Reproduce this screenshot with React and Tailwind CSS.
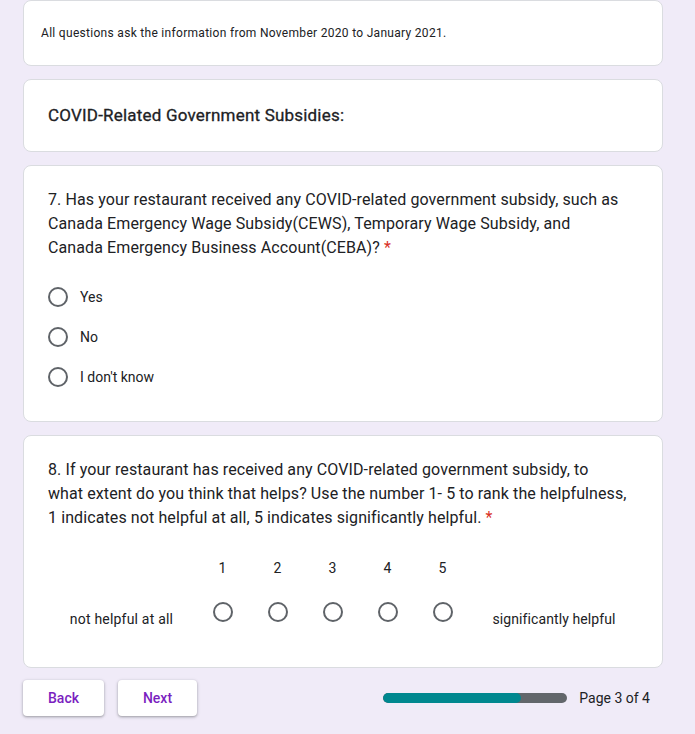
import React from "react";

const font = { fontFamily: "Roboto, 'Noto Sans', Arial, sans-serif" };

function Radio() {
  return (
    <span className="block w-5 h-5 rounded-full border-2 border-[#5f6368] bg-white shrink-0" />
  );
}

function Card({ className = "", children }) {
  return (
    <div
      className={
        "bg-white border border-[#dadce0] rounded-lg w-[640px] " + className
      }
    >
      {children}
    </div>
  );
}

function App() {
  const options = ["Yes", "No", "I don't know"];
  const scale = [1, 2, 3, 4, 5];

  return (
    <div
      className="bg-[#f0ebf8] min-h-screen w-full text-[#202124]"
      style={font}
    >
      <div className="ml-[23px] flex flex-col gap-[13px]">
        {/* Intro */}
        <Card className="h-[66px] flex items-center px-[17px]">
          <p className="text-[12px] tracking-[0.3px]">
            All questions ask the information from November 2020 to January
            2021.
          </p>
        </Card>

        {/* Section header */}
        <Card className="h-[73px] flex items-center px-6">
          <h2 className="text-[17px] tracking-[0.2px] [-webkit-text-stroke:0.3px_#202124]">
            COVID-Related Government Subsidies:
          </h2>
        </Card>

        {/* Question 7 */}
        <Card className="h-[257px] px-6 pt-[22px]">
          <p className="text-[16px] leading-6 tracking-[0.1px] whitespace-nowrap">
            7. Has your restaurant received any COVID-related government
            subsidy, such as
            <br />
            Canada Emergency Wage Subsidy(CEWS), Temporary Wage Subsidy, and
            <br />
            Canada Emergency Business Account(CEBA)?{" "}
            <span className="text-[#d93025]">*</span>
          </p>
          <div className="mt-[17px] flex flex-col">
            {options.map((o) => (
              <label key={o} className="h-10 flex items-center gap-3">
                <Radio />
                <span className="text-[14px]">{o}</span>
              </label>
            ))}
          </div>
        </Card>

        {/* Question 8 */}
        <Card className="h-[233px] px-6 pt-[22px]">
          <p className="text-[16px] leading-6 tracking-[0.1px] whitespace-nowrap">
            8. If your restaurant has received any COVID-related government
            subsidy, to
            <br />
            what extent do you think that helps? Use the number 1- 5 to rank
            the helpfulness,
            <br />1 indicates not helpful at all, 5 indicates significantly
            helpful. <span className="text-[#d93025]">*</span>
          </p>
          <div className="mt-[26px]">
            <div className="flex h-6 items-center text-[14px]">
              <div className="w-[147px]" />
              {scale.map((n) => (
                <div key={n} className="w-[55px] text-center">
                  {n}
                </div>
              ))}
            </div>
            <div className="flex h-12 mt-2 items-center text-[14px]">
              <div className="w-[147px] text-center mt-[14px] tracking-[0.2px]">
                not helpful at all
              </div>
              {scale.map((n) => (
                <div key={n} className="w-[55px] flex justify-center">
                  <Radio />
                </div>
              ))}
              <div className="w-[168px] text-center mt-[14px] tracking-[0.1px]">
                significantly helpful
              </div>
            </div>
          </div>
        </Card>

        {/* Footer */}
        <div className="w-[640px] flex items-center justify-between mt-[-1px] pr-[13px]">
          <div className="flex gap-[14px]">
            <button className="w-[81px] h-9 bg-white rounded shadow-[0_1px_2px_rgba(60,64,67,0.3),0_1px_3px_1px_rgba(60,64,67,0.15)] text-[14px] font-medium text-[#7b1fbf]">
              Back
            </button>
            <button className="w-[79px] h-9 bg-white rounded shadow-[0_1px_2px_rgba(60,64,67,0.3),0_1px_3px_1px_rgba(60,64,67,0.15)] text-[14px] font-medium text-[#7b1fbf]">
              Next
            </button>
          </div>
          <div className="flex items-center gap-3 pl-[1px]">
            <div className="w-[184px] h-[10px] rounded-full bg-[#62666b] overflow-hidden">
              <div className="h-full w-[75%] rounded-full bg-[#00878f]" />
            </div>
            <span className="text-[14px]">Page 3 of 4</span>
          </div>
        </div>
      </div>
    </div>
  );
}

export default App;
